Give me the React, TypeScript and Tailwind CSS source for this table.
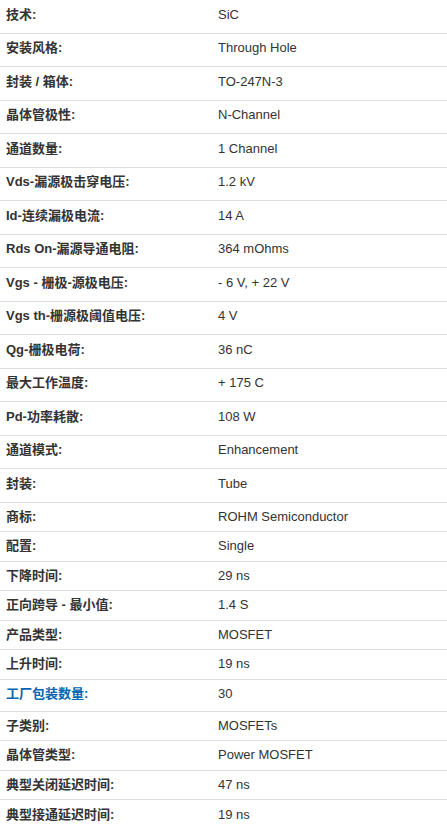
const rows: { label: string; value: string; link?: boolean; h: string }[] = [
    { label: "技术:", value: "SiC", h: "h-[33.5px] pb-[4px]" },
    { label: "安装风格:", value: "Through Hole", h: "h-[33.5px] pb-[4px]" },
    { label: "封装 / 箱体:", value: "TO-247N-3", h: "h-[33.5px] pb-[4px]" },
    { label: "晶体管极性:", value: "N-Channel", h: "h-[33.5px] pb-[4px]" },
    { label: "通道数量:", value: "1 Channel", h: "h-[33.5px] pb-[4px]" },
    { label: "Vds-漏源极击穿电压:", value: "1.2 kV", h: "h-[33.5px] pb-[4px]" },
    { label: "Id-连续漏极电流:", value: "14 A", h: "h-[33.5px] pb-[4px]" },
    { label: "Rds On-漏源导通电阻:", value: "364 mOhms", h: "h-[33.5px] pb-[4px]" },
    { label: "Vgs - 栅极-源极电压:", value: "- 6 V, + 22 V", h: "h-[33.5px] pb-[4px]" },
    { label: "Vgs th-栅源极阈值电压:", value: "4 V", h: "h-[33.5px] pb-[4px]" },
    { label: "Qg-栅极电荷:", value: "36 nC", h: "h-[33.5px] pb-[4px]" },
    { label: "最大工作温度:", value: "+ 175 C", h: "h-[33.5px] pb-[4px]" },
    { label: "Pd-功率耗散:", value: "108 W", h: "h-[33.5px] pb-[4px]" },
    { label: "通道模式:", value: "Enhancement", h: "h-[33.5px] pb-[4px]" },
    { label: "封装:", value: "Tube", h: "h-[33.5px] pb-[4px]" },
    { label: "商标:", value: "ROHM Semiconductor", h: "h-[29.5px] pb-[1px]" },
    { label: "配置:", value: "Single", h: "h-[29.5px] pb-[1px]" },
    { label: "下降时间:", value: "29 ns", h: "h-[29.5px] pb-[1px]" },
    { label: "正向跨导 - 最小值:", value: "1.4 S", h: "h-[29.5px] pb-[1px]" },
    { label: "产品类型:", value: "MOSFET", h: "h-[29.5px] pb-[1px]" },
    { label: "上升时间:", value: "19 ns", h: "h-[29.5px] pb-[1px]" },
    { label: "工厂包装数量:", value: "30", link: true, h: "h-[32px] pb-[2px]" },
    { label: "子类别:", value: "MOSFETs", h: "h-[29.5px] pb-[1px]" },
    { label: "晶体管类型:", value: "Power MOSFET", h: "h-[29.5px] pb-[1px]" },
    { label: "典型关闭延迟时间:", value: "47 ns", h: "h-[29.5px] pb-[1px]" },
    { label: "典型接通延迟时间:", value: "19 ns", h: "h-[29.5px] pb-[1px]" },
]

export default function App() {
    return (
        <div className="w-[447px] h-[828px] overflow-hidden bg-white text-[13px] text-[#333] font-['Liberation_Sans','Noto_Sans_CJK_SC',sans-serif]">
            {rows.map((r, i) => (
                <div key={i} className={`${r.h} flex items-center border-b border-[#dddddd] last:border-b-0`}>
                    <div className={`w-[218px] pl-[6px] font-bold ${r.link ? "text-[#0066b2]" : "text-[#333]"}`}>{r.label}</div>
                    <div className="flex-1">{r.value}</div>
                </div>
            ))}
        </div>
    )
}
